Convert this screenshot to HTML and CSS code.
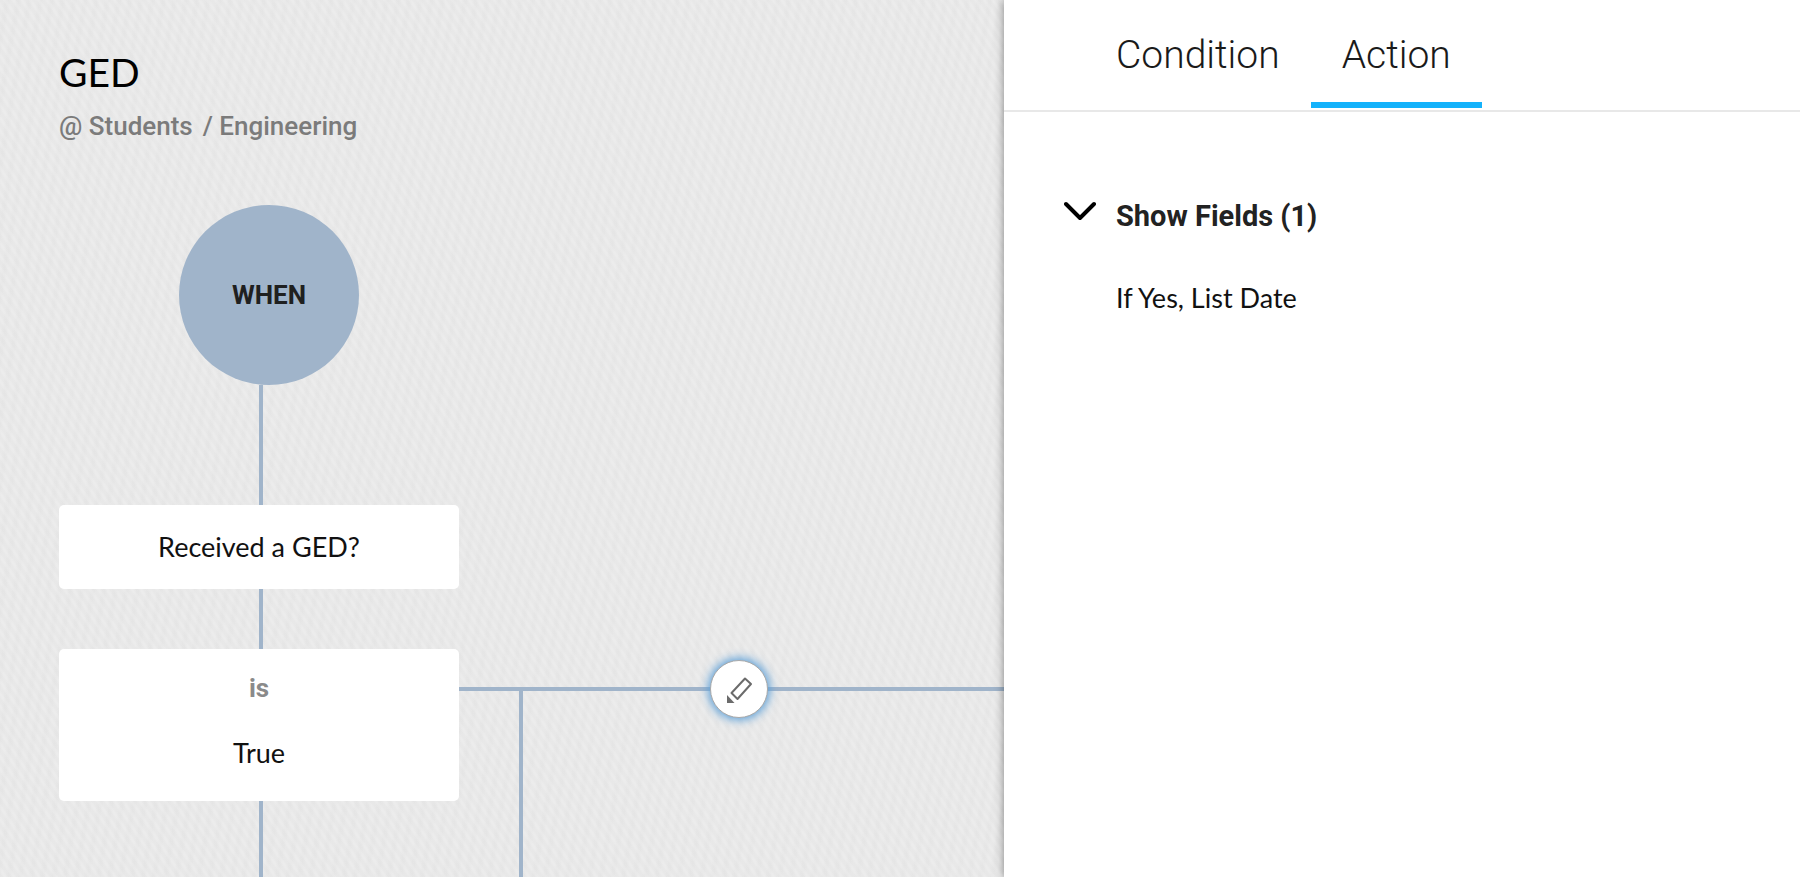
FILE: index.html
```html
<!DOCTYPE html>
<html lang="en">

<head>
  <meta charset="UTF-8">
  <meta name="viewport" content="width=device-width, initial-scale=1.0">
  <title>GED</title>
  <link rel="stylesheet" href="styles.css">
</head>

<body>

  <main class="canvas">
    <h1>GED</h1>
    <p class="path"><span>@ Students</span><span>/ Engineering</span></p>

    <div class="flow">
      <div class="when">WHEN</div>
      <div class="line line-long"></div>
      <div class="card">Received a GED?</div>
      <div class="line"></div>
      <div class="row">
        <div class="step">
          <div class="card card-rule">
            <span class="operator">is</span>
            <span>True</span>
          </div>
          <div class="line line-rest"></div>
        </div>
        <div class="branch">
          <div class="branch-down"></div>
          <button class="edit" type="button" aria-label="Edit">
            <svg width="28" height="28" viewBox="0 0 28 28">
              <path d="M20 3.500 L26 9 L12.500 24 L6.500 18 Z" fill="none" stroke="#6b6b6b" stroke-width="2" stroke-linejoin="round" />
              <path d="M2 20 L9.500 28 H2 Z" fill="#6b6b6b" />
            </svg>
          </button>
        </div>
      </div>
    </div>
  </main>

  <aside class="panel">
    <div class="tabs" role="tablist">
      <button class="tab" type="button" role="tab" aria-selected="false">Condition</button>
      <button class="tab active" type="button" role="tab" aria-selected="true">Action</button>
    </div>
    <div class="fields">
      <button class="toggle" type="button" aria-expanded="true">
        <svg width="32" height="28" viewBox="0 0 32 28">
          <path d="M2 6 L16 20 L30 6" fill="none" stroke="#000" stroke-width="4" stroke-linecap="round" stroke-linejoin="round" />
        </svg>
        Show Fields (1)
      </button>
      <ul>
        <li>If Yes, List Date</li>
      </ul>
    </div>
  </aside>

</body>

</html>
```
FILE: styles.css
```css
* {
  box-sizing: border-box;
  padding: 0;
  margin: 0;
}

li {
  list-style: none;
}

button {
  border: 0;
  background: none;
  cursor: pointer;
}

body {
  display: grid;
  grid-template-columns: 251fr 199fr;
  min-height: 100vh;
  font: 27px/32px Lato, "Liberation Sans", sans-serif;
  color: #111;
}

/* left side */
.canvas {
  display: flex;
  flex-direction: column;
  padding: 48px 0 0 59px;
  overflow: hidden;
  background:
    repeating-linear-gradient(56deg, rgba(0, 0, 0, 0.01) 0 2px, rgba(255, 255, 255, 0.06) 4px 5px, rgba(0, 0, 0, 0.01) 7px),
    repeating-linear-gradient(100deg, rgba(255, 255, 255, 0.06) 0 3px, rgba(0, 0, 0, 0.006) 6px 8px, rgba(255, 255, 255, 0.06) 11px),
    #eaeaea;
}

h1 {
  font-size: 39px;
  font-weight: 400;
  line-height: 48px;
  color: #000;
}

.path {
  display: flex;
  gap: 10px;
  margin: 14px 0 63px;
  font-family: Roboto, sans-serif;
  font-size: 26px;
  font-weight: 500;
  color: #7b7b7b;
}

.flow {
  display: flex;
  flex: 1;
  flex-direction: column;
}

.when {
  width: 180px;
  height: 180px;
  margin-left: 120px;
  border-radius: 50%;
  background-color: #a0b4ca;
  font: 700 26px/180px Roboto, sans-serif;
  text-align: center;
  color: #1f2020;
}

.line {
  width: 4px;
  height: 60px;
  margin-left: 200px;
  background-color: #a0b4ca;
}

.line-long {
  height: 120px;
}

.line-rest {
  flex: 1;
}

.card {
  width: 400px;
  padding: 26px 20px;
  border-radius: 5px;
  background-color: #fff;
  text-align: center;
}

.card-rule {
  display: flex;
  flex-direction: column;
  gap: 33px;
  padding: 23px 20px 32px;
}

.operator {
  font-family: Roboto, sans-serif;
  font-size: 26px;
  font-weight: 700;
  color: #8a8a8a;
}

.row {
  display: flex;
  flex: 1;
}

.step {
  display: flex;
  flex-direction: column;
}

.branch {
  position: relative;
  display: flex;
  flex: 1;
  margin-top: 38px;
  padding-left: 60px;
  border-top: 4px solid #a0b4ca;
}

.branch-down {
  width: 4px;
  background-color: #a0b4ca;
}

/* sits on the branch line */
.edit {
  position: absolute;
  top: -31px;
  left: 251px;
  display: flex;
  align-items: center;
  justify-content: center;
  width: 58px;
  height: 58px;
  border: 1px solid #a9a9a9;
  border-radius: 50%;
  background-color: #fff;
  box-shadow: 0 0 10px 2px #5b9fd8;
}

/* right side */
.panel {
  position: relative;
  background-color: #fff;
  box-shadow: 0 0 9px rgba(0, 0, 0, 0.45);
}

.tabs {
  display: flex;
  padding: 31px 0 2px 81px;
  border-bottom: 2px solid #e8e8e8;
}

.tab {
  padding: 0 31px 23px;
  border-bottom: 6px solid transparent;
  font: 300 39px/48px Roboto, sans-serif;
  color: #1a1a1a;
}

.active {
  border-color: #14b2fb;
}

.fields {
  padding: 86px 60px 40px;
}

.toggle {
  display: flex;
  gap: 20px;
  font: 700 29px/36px Roboto, sans-serif;
  color: #222;
}

.fields ul {
  margin-top: 48px;
  padding-left: 52px;
}
```
